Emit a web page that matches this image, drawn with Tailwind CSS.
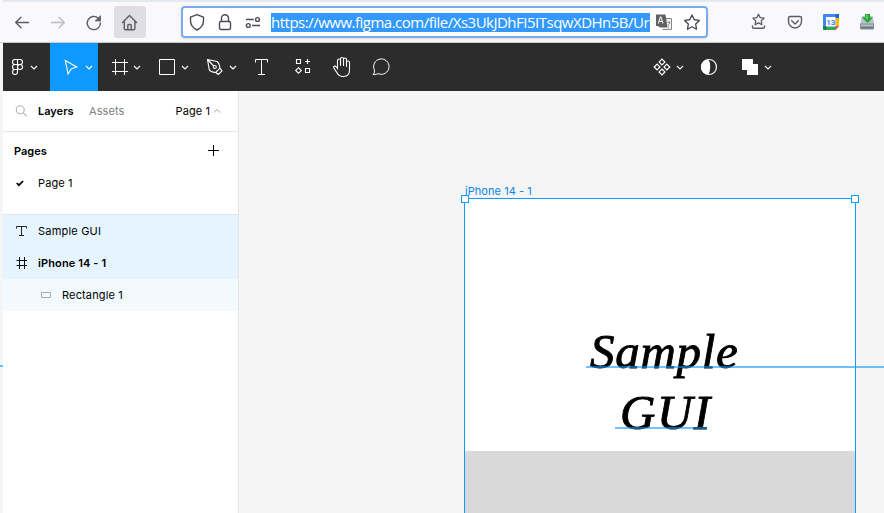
<!DOCTYPE html>
<html lang="en">
<head>
<meta charset="utf-8">
<title>Figma</title>
<script src="https://cdn.jsdelivr.net/npm/@tailwindcss/browser@4"></script>
</head>
<body class="w-[884px] h-[513px] overflow-hidden bg-[#f5f5f5] font-['Inter',sans-serif] text-[11px] text-black">
<div class="flex h-[513px] flex-col">
  <!-- Browser navigation bar -->
  <header class="flex h-[43px] shrink-0 border-b border-[#cccccc] bg-[#f9f9fb] relative">
    <div class="absolute left-[3px] right-0 top-0 h-[2px] bg-gradient-to-b from-[#e3e8f2] to-[#e6ebec]"></div>
    <svg class="h-[42px] w-[181px] shrink-0" viewBox="0 0 181 42" fill="none" stroke="#5b5b66" stroke-width="1.4" stroke-linecap="round" stroke-linejoin="round">
      <rect x="114" y="6" width="32" height="32" rx="3" fill="#dedee4" stroke="none"/>
      <path d="M28.5 22.5H15.8M21 17.2l-5.3 5.3 5.3 5.3"/>
      <path stroke="#bdbdc3" d="M51.5 22.5h12.7M59 17.2l5.3 5.3-5.3 5.3"/>
      <path d="M98.3 18.2A6.6 6.6 0 1 0 100.4 23"/>
      <path d="M100.5 16v5h-5z" fill="#5b5b66" stroke-width=".8"/>
      <path d="M122.5 22.4l7-6.8 7 6.8M124.3 21.5v7q0 1.3 1.3 1.3h8q1.3 0 1.3-1.3v-7M127.8 29.5v-4q0-1 1-1h1.4q1 0 1 1v4"/>
    </svg>
    <div class="mt-[6px] flex h-[32px] w-[527px] items-center rounded-[4px] border-2 border-[#7baaf0] bg-white shadow-sm">
      <svg class="h-[28px] w-[88px] shrink-0" viewBox="183 8 88 28" fill="none" stroke="#4b4b54" stroke-width="1.4" stroke-linejoin="round">
        <path d="M197 14.7l6.5 2.5v3.6q0 6-6.5 9.2-6.500-3.200-6.500-9.200v-3.600z"/>
        <rect x="219.500" y="21.500" width="11" height="8" rx="1.500"/>
        <path d="M221.500 21.500v-3.300a3.500 3.500 0 0 1 7 0v3.300"/>
        <path d="M246 19.500h7.800M252 25.500h8"/>
        <circle cx="257.500" cy="19.500" r="1.900"/><circle cx="248.300" cy="25.500" r="1.900"/>
      </svg>
      <div class="flex h-[19px] w-[379px] items-center bg-[#3399ff] font-['Open_Sans',sans-serif] text-[15px] leading-[19px] whitespace-nowrap text-white"><span class="tracking-[-0.5px]">https://www.figma.com/file/Xs3UkJDhFI5ITsqwXDHn5B/Ur</span></div>
      <svg class="h-[28px] w-[54px] shrink-0" viewBox="650 8 54 28" fill="none">
        <path d="M664 18.500h7.500v11h-9" stroke="#858585" fill="#f4f4f4"/>
        <path d="M656 14.500h9.500l2 13h-7.500l-2-1.500h-2z" fill="#606060"/>
        <path d="M658.300 23.500l2-6.500h.7l2 6.500m-4-2h3.500" stroke="#eee" stroke-width="1.100"/>
        <path d="M667.500 22.300q2.800-1.300 2.300.6-.3 1-1.300 1.800v.8m0 1.200v1" stroke="#777"/>
        <path d="M692 15l2.250 4.750 5.100.7-3.700 3.600.9 5.150-4.550-2.500-4.550 2.500.9-5.150-3.700-3.600 5.100-.7z" stroke="#45454e" stroke-width="1.300" stroke-linejoin="round"/>
      </svg>
    </div>
    <svg class="h-[42px] w-[176px] shrink-0" viewBox="708 0 176 42" fill="none" stroke="#5b5b66" stroke-width="1.400" stroke-linejoin="round" stroke-linecap="round">
      <path d="M758.500 14.300l1.700 3.400 3.800.5-2.800 2.700.7 3.900-3.400-1.900-3.400 1.900.7-3.900-2.800-2.700 3.800-.5z" stroke-width="1.300"/>
      <path d="M752.500 26v1q0 1.300 1.300 1.300h9.400q1.300 0 1.300-1.300v-1"/>
      <path d="M790 16.500h10q1.500 0 1.500 1.500v3.500a6.500 6.500 0 0 1-13 0v-3.500q0-1.500 1.500-1.500zM791.700 20.700l3.300 3.200 3.300-3.200"/>
      <g stroke="none">
        <rect x="823" y="14" width="16" height="16" rx="1" fill="#4285f4"/>
        <path d="M835.500 18h3.500v8.500h-3.500z" fill="#fbbc04"/><path d="M835.500 14h2.500q1 0 1 1v3h-3.500z" fill="#1967d2"/>
        <path d="M826.500 26.500h9v3.500h-9z" fill="#34a853"/><path d="M823 26.500h3.500v3.500h-2.500q-1 0-1-1z" fill="#188038"/>
        <path d="M835.500 26.500h3.500l-3.500 3.500z" fill="#ea4335"/><path d="M839 26.500v3.500h-3.500z" fill="#f9f9fb"/>
        <rect x="826" y="17" width="9.500" height="9.500" fill="#fff"/>
        <text x="830.800" y="25" text-anchor="middle" font-family="Roboto, sans-serif" font-size="8" font-weight="700" fill="#4285f4">13</text>
        <path d="M862 16h10.500l1.800 8h-14z" fill="#b9c2cb"/>
        <path d="M860 23.500h14v5q0 1-1 1h-12q-1 0-1-1z" fill="#808b95"/>
        <path d="M861 24.500h12v1.800h-12z" fill="#b5c0ca"/><path d="M861.500 27.200h11v1h-11z" fill="#69747f"/>
        <path d="M865 14h5v3.500h3l-5.500 5.500-5.500-5.500h3z" fill="#20a52e"/><path d="M865.800 14.800h2v5.500l-2-1.500z" fill="#65d260"/>
      </g>
    </svg>
  </header>

  <!-- Editor toolbar -->
  <nav class="ml-[3px] flex h-[48px] shrink-0 bg-[#2c2c2c] text-white">
    <button class="h-12 w-[47px] shrink-0"><svg class="h-12 w-[47px]" viewBox="3 43 47 48" fill="none" stroke="currentColor" stroke-width="1.100">
      <path d="M17.500 59.500h-2.500a2.500 2.500 0 0 0 0 5h2.500zM17.500 59.500h2.500a2.500 2.500 0 0 1 0 5h-2.500M17.500 64.500h-2.500a2.500 2.500 0 0 0 0 5h2.500zM17.500 69.500h-2.500a2.500 2.500 0 1 0 2.500 2.500z"/><circle cx="20" cy="67" r="2.500"/><path d="M31 66l3 3 3-3"/></svg></button>
    <button class="h-12 w-12 shrink-0 bg-[#0d99ff]"><svg class="size-12" viewBox="50 43 48 48" fill="none" stroke="currentColor" stroke-width="1.100"><path d="M65.300 60.600l11.400 6.400-5.600 1.900-3 5.100z"/><path d="M86 66l3 3 3-3"/></svg></button>
    <button class="h-12 w-12 shrink-0"><svg class="size-12" viewBox="98 43 48 48" fill="none" stroke="currentColor"><path d="M115.500 59v16M124.500 59v16M112 62.500h16M112 71.500h16"/><path d="M134 66l3 3 3-3" stroke-width="1.100"/></svg></button>
    <button class="h-12 w-12 shrink-0"><svg class="size-12" viewBox="146 43 48 48" fill="none" stroke="currentColor"><path d="M159.500 59.500h15v15h-15z"/><path d="M182 66l3 3 3-3" stroke-width="1.100"/></svg></button>
    <button class="h-12 w-12 shrink-0"><svg class="size-12" viewBox="194 43 48 48" fill="none" stroke="currentColor" stroke-linejoin="round" stroke-width="1.100"><path d="M207.500 59.500l9.500 2q2.300 1.500 2.900 6.700l-4.200 4.300q-5.500-.5-6.500-3zM207.500 59.500l6.300 6.500M219.900 68.200l2.100 2.600-3.700 3.700-2.600-2"/><circle cx="214.800" cy="67" r="1.500"/><path d="M230 66l3 3 3-3"/></svg></button>
    <button class="h-12 w-10 shrink-0"><svg class="h-12 w-10" viewBox="242 43 40 48" fill="none" stroke="currentColor"><path d="M255.500 62.500v-3h12v3M261.500 59.500v15M258 74.500h7"/></svg></button>
    <button class="h-12 w-10 shrink-0"><svg class="h-12 w-10" viewBox="282 43 40 48" fill="none" stroke="currentColor" stroke-width="1.100"><path d="M296.500 59.500h4v4h-4zM305.500 68.500h4v4h-4zM307.500 59v5M305 61.500h5M298.500 67.700l2.800 2.800-2.800 2.800-2.800-2.800z"/></svg></button>
    <button class="h-12 w-10 shrink-0"><svg class="h-12 w-10" viewBox="322 43 40 48" fill="none" stroke="currentColor" stroke-width="1.100" stroke-linejoin="round" stroke-linecap="round"><path d="M337.500 69v-8.500a1.500 1.500 0 0 1 3 0v5M340.500 65v-6a1.500 1.500 0 0 1 3 0v6.500M343.500 65v-5.500a1.500 1.500 0 0 1 3 0v7M346.500 66v-3.500a1.500 1.500 0 0 1 3 0v7.500q0 6.500-6 6.500h-1.500q-2.500 0-4.300-2.600l-4-6.100a1.300 1.300 0 0 1 2-1.500l1.800 1.700"/></svg></button>
    <button class="h-12 w-10 shrink-0"><svg class="h-12 w-10" viewBox="362 43 40 48" fill="none" stroke="currentColor" stroke-linejoin="round"><path d="M373 74.500q1.900-1.600 1.500-4.300a7.700 7.700 0 1 1 3.800 3.500q-1.500.8-5.300.8z"/></svg></button>
    <div class="flex-1"></div>
    <button class="h-12 w-[46px] shrink-0"><svg class="h-12 w-[46px]" viewBox="646 43 46 48" fill="none" stroke="currentColor" stroke-width="1.200"><path d="M662 59.200l2.900 2.900-2.900 2.900-2.900-2.900zM662 69l2.900 2.900-2.900 2.900-2.900-2.900zM657.100 64.100l2.900 2.900-2.900 2.900-2.900-2.900zM666.900 64.100l2.900 2.900-2.900 2.900-2.900-2.900z"/><path d="M677 66l3 3 3-3" stroke-width="1.100"/></svg></button>
    <button class="h-12 w-[34px] shrink-0"><svg class="h-12 w-[34px]" viewBox="692 43 34 48" fill="none" stroke="currentColor"><circle cx="709" cy="67" r="7.500" stroke-width="1.200"/><path d="M708.500 59.500a7.500 7.500 0 0 0 0 15q1.700-2.500 1.700-7.500t-1.700-7.500z" fill="currentColor" stroke="none"/></svg></button>
    <button class="mr-[110px] h-12 w-12 shrink-0"><svg class="size-12" viewBox="726 43 48 48" fill="none" stroke="currentColor"><path d="M742 59h11v5h5v11h-11v-5h-5z" fill="currentColor" stroke="none"/><path d="M765 66l3 3 3-3" stroke-width="1.100"/></svg></button>
  </nav>

  <div class="flex min-h-0 flex-1">
    <!-- Layers panel -->
    <aside class="ml-[3px] flex w-[236px] shrink-0 flex-col border-r border-[#e5e5e5] bg-white">
      <div class="flex h-[41px] shrink-0 items-center border-b border-[#e5e5e5]">
        <svg class="ml-[12px] size-3" viewBox="0 0 12 12" fill="none" stroke="#b3b3b3" stroke-width="1.100"><circle cx="5.300" cy="4.800" r="4"/><path d="M8.300 7.800l3.500 3.500"/></svg>
        <span class="ml-[11px] w-[51px] font-semibold">Layers</span>
        <span class="w-[87px] tracking-[0.1px] text-[#808080]">Assets</span>
        <span class="-ml-[0.5px] tracking-[0.1px]">Page 1</span>
        <svg class="ml-[3px] h-2 w-2" viewBox="0 0 8 8" fill="none" stroke="#a0a0a0"><path d="M1 5.500l3-3 3 3"/></svg>
      </div>
      <div class="flex h-[38px] items-center justify-between pr-[19px] pl-[11px]">
        <span class="font-semibold">Pages</span>
        <svg class="size-3" viewBox="0 0 12 12" stroke="#000"><path d="M1 5.500h11M6.500 0v11"/></svg>
      </div>
      <div class="flex h-[44px] items-start pt-[5px] pl-[12px]">
        <svg class="mt-[3px] mr-[13px] h-[10px] w-[10px]" viewBox="0 0 10 10" fill="none" stroke="#000" stroke-width="1.700"><path d="M1.700 5l2.200 2.200 4.200-4.200"/></svg>
        <span class="leading-4 tracking-[0.1px]">Page 1</span>
      </div>
      <div class="flex h-[33px] items-center border-t border-[#e5e5e5] bg-[#e5f4ff] pl-[12px]">
        <svg class="mr-[11px] size-3" viewBox="0 0 12 12" fill="none" stroke="#222"><path d="M1.500 3.500v-2h10v2M6.500 1.500v9M4 10.500h5"/></svg><span class="tracking-[0.2px]">Sample GUI</span>
      </div>
      <div class="flex h-8 items-center bg-[#e5f4ff] pl-[12px]">
        <svg class="mr-[11px] size-3" viewBox="0 0 12 12" fill="none" stroke="#111"><path d="M4.500 0v12M9.500 0v12M1.500 3.500h11M1.500 8.500h11"/></svg><span class="font-semibold tracking-[0.12px]">iPhone 14 - 1</span>
      </div>
      <div class="flex h-8 items-center bg-[#f2f9ff] pl-[37px]">
        <svg class="mr-[10px] h-[8px] w-[12px]" viewBox="0 0 12 8" fill="none" stroke="#aaa"><path d="M1.500 1.500h9v5h-9z"/></svg><span class="tracking-[0.15px]">Rectangle 1</span>
      </div>
    </aside>
    <!-- Design canvas -->
    <main class="relative flex-1 overflow-hidden">
      <div class="absolute top-[92px] left-[226px] leading-4 tracking-[0.05px] whitespace-nowrap text-[#0d85e8]">iPhone 14 - 1</div>
      <div class="absolute top-[107px] left-[225px] h-[330px] w-[392px] border border-[#0d99ff] bg-white">
        <div class="mt-[252px] h-[80px] bg-[#d9d9d9]"></div>
      </div>
      <div class="absolute top-[104px] left-[222px] size-2 border border-[#0d99ff] bg-white"></div>
      <div class="absolute top-[104px] left-[612px] size-2 border border-[#0d99ff] bg-white"></div>
      <div class="absolute top-[231px] left-[351px] font-['Liberation_Serif',serif] text-[49px] leading-[60px] font-normal tracking-[0.7px] whitespace-nowrap italic [-webkit-text-stroke:0.9px_black]">Sample</div>
      <div class="absolute top-[292px] left-[381px] font-['Liberation_Serif',serif] text-[49px] leading-[60px] font-normal tracking-[1.5px] whitespace-nowrap italic [-webkit-text-stroke:0.9px_black]">GUI</div>
      <div class="absolute top-[275px] left-[347px] h-[2px] w-[298px] bg-[#0d99ff]/60"></div>
      <div class="absolute top-[336px] left-[376px] h-[2px] w-[92px] bg-[#0d99ff]/60"></div>
    </main>
  </div>
</div>
<div class="absolute top-[365px] left-0 h-[2px] w-[3px] bg-[#0d99ff]/60"></div>
</body>
</html>
